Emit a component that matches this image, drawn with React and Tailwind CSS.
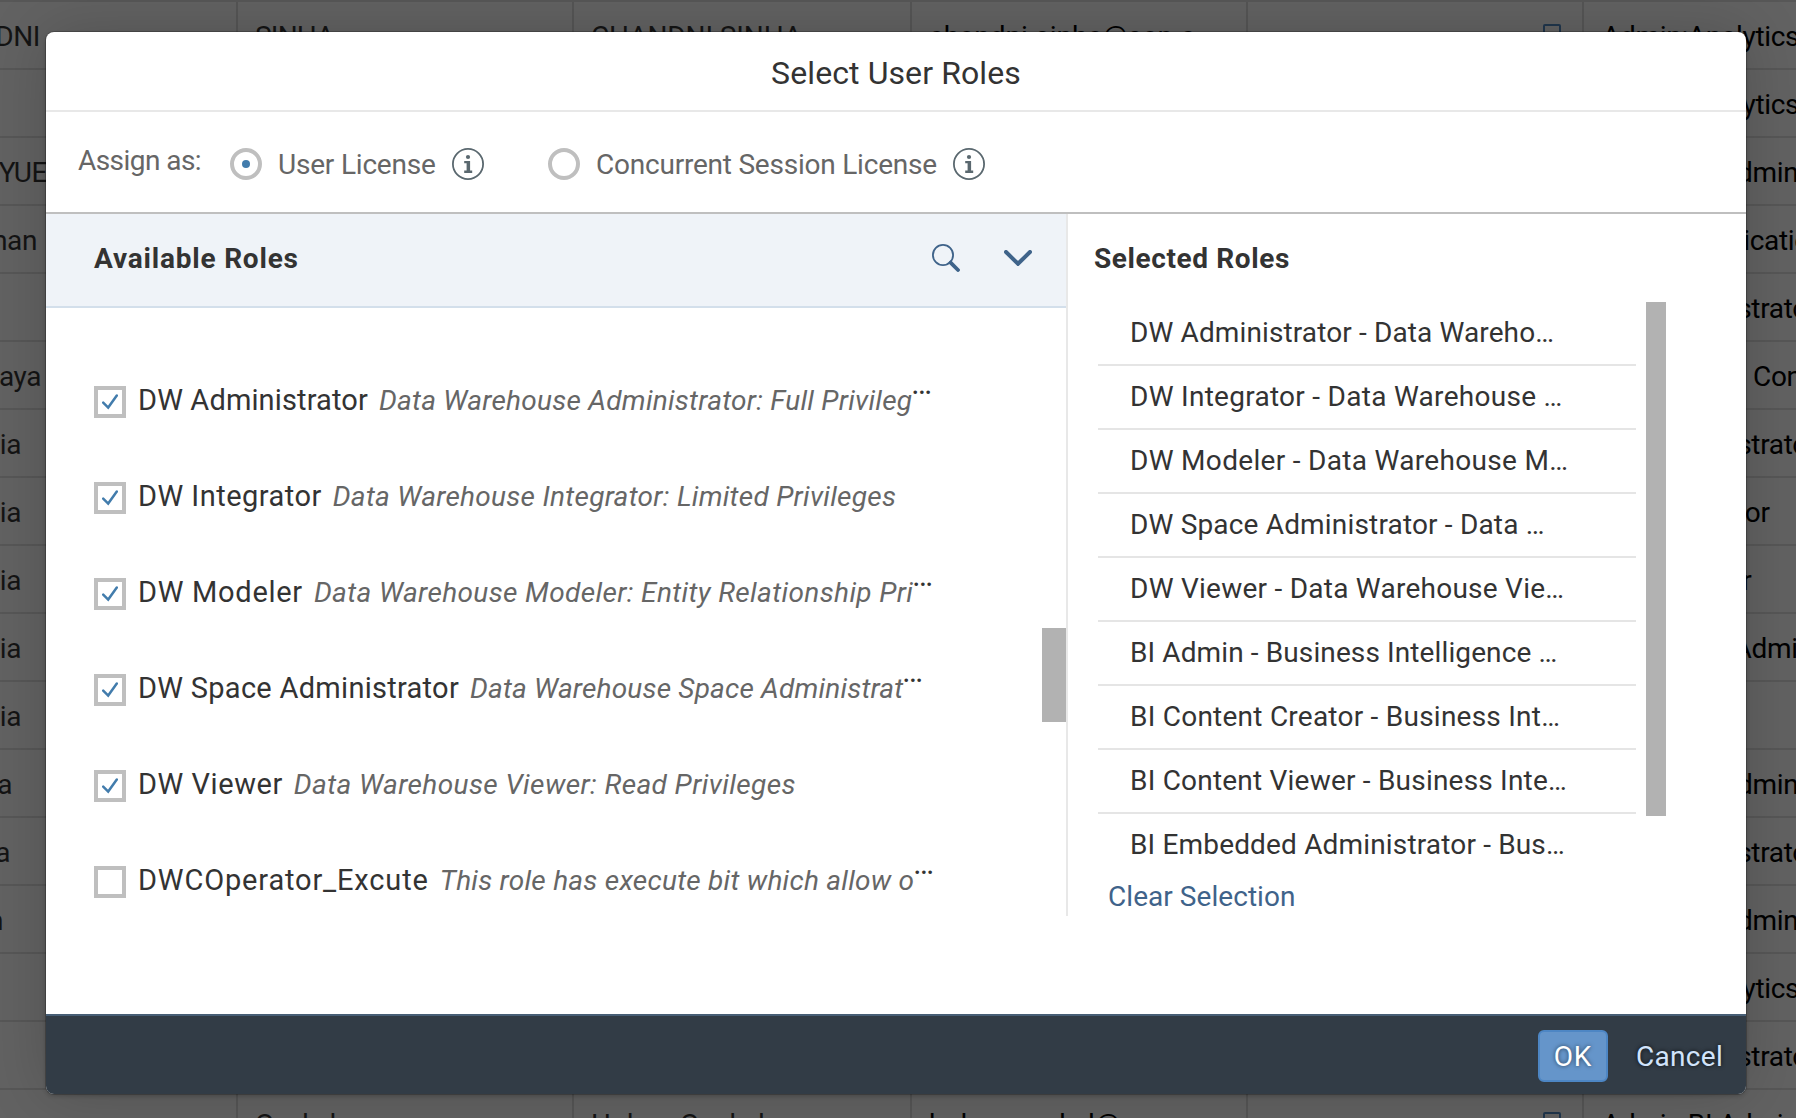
const FONT = 'font-[Roboto,"Liberation_Sans",sans-serif]';

const tableRows = [
  { first: "CHANDNI", end: "w-[40px]", last: "SINHA", name: "CHANDNI SINHA", mail: "chandni.sinha@sap.c", box: true, role: "Admin:Analytics" },
  { first: "", end: "w-[40px]", role: "Admin:Analytics" },
  { first: "YUE", end: "w-[47px]", role: "Admin:BI Admin" },
  { first: "Rahman", end: "w-[37px]", role: "Admin:Application" },
  { first: "", end: "w-[40px]", role: "DW Administrator" },
  { first: "aya", end: "w-[41px]", role: "Content", pad: "pl-[169px]" },
  { first: "ia", end: "w-[21px]", role: "DW Administrator" },
  { first: "ia", end: "w-[21px]", role: "DW Integrator" },
  { first: "ia", end: "w-[21px]", role: "DW Modeler" },
  { first: "ia", end: "w-[21px]", role: "DW Space Admin" },
  { first: "ia", end: "w-[21px]", role: "" },
  { first: "a", end: "w-[12px]", role: "Admin:BI Admin" },
  { first: "a", end: "w-[10px]", role: "DW Administrator" },
  { first: "n", end: "w-[3px]", role: "Admin:BI Admin" },
  { first: "", end: "w-[40px]", role: "Admin:Analytics" },
  { first: "", end: "w-[40px]", role: "DW Administrator" },
  { first: "", end: "w-[40px]", last: "Gockel", name: "Holger Gockel", mail: "holger.gockel@", box: true, role: "Admin:BI Admin" },
];

const roles = [
  { name: "DW Administrator", desc: "Data Warehouse Administrator: Full Privileg", cut: true, on: true, nt: "tracking-[0.13px]", dt: "tracking-[0.25px]", gap: "ml-[11px]" },
  { name: "DW Integrator", desc: "Data Warehouse Integrator: Limited Privileges", on: true, nt: "tracking-[0.47px]", dt: "tracking-[0.27px]", gap: "ml-[11px]" },
  { name: "DW Modeler", desc: "Data Warehouse Modeler: Entity Relationship Pri", cut: true, on: true, nt: "tracking-[0.71px]", dt: "tracking-[0.37px]", gap: "ml-[11px]" },
  { name: "DW Space Administrator", desc: "Data Warehouse Space Administrat", cut: true, on: true, nt: "tracking-[0.28px]", dt: "tracking-[0.18px]", gap: "ml-[11px]" },
  { name: "DW Viewer", desc: "Data Warehouse Viewer: Read Privileges", on: true, nt: "tracking-[0.55px]", dt: "tracking-[0.4px]", gap: "ml-[11px]" },
  { name: "DWCOperator_Excute", desc: "This role has execute bit which allow o", cut: true, on: false, nt: "tracking-[0.84px]", dt: "tracking-[0.25px]", gap: "ml-[11px]" },
];

const selected = [
  ["DW Administrator - Data Wareho…", "tracking-[0.12px]"],
  ["DW Integrator - Data Warehouse …", "tracking-[0.28px]"],
  ["DW Modeler - Data Warehouse M…", "tracking-[0.31px]"],
  ["DW Space Administrator - Data …", "tracking-[0.17px]"],
  ["DW Viewer - Data Warehouse Vie…", "tracking-[0.25px]"],
  ["BI Admin - Business Intelligence …", "tracking-[0.11px]"],
  ["BI Content Creator - Business Int…", "tracking-[0.24px]"],
  ["BI Content Viewer - Business Inte…", "tracking-[0.21px]"],
  ["BI Embedded Administrator - Bus…", "tracking-[0.16px]"],
];

function InfoIcon() {
  return (
    <svg className="size-8 shrink-0" viewBox="0 0 32 32" fill="none">
      <circle cx="16" cy="16" r="15.1" stroke="#5a686f" strokeWidth="1.8" />
      <circle cx="16" cy="9" r="2.1" fill="#5a686f" />
      <path d="M12.2 13h5.9v9.6h2.1v2.3h-8v-2.3h2.4v-7.3h-2.4z" fill="#5a686f" />
    </svg>
  );
}

function Radio({ on }) {
  return (
    <span className="flex size-8 shrink-0 items-center justify-center rounded-full border-4 border-[#bfbfbf] bg-white">
      {on && <span className="size-2 rounded-full bg-[#427cac]" />}
    </span>
  );
}

function UserTable() {
  return (
    <div className="h-[1118px] overflow-hidden bg-[#626262] text-[28px] leading-[66px] tracking-[-0.4px]">
      {tableRows.map((r, i) => (
        <div key={i} className="grid h-[68px] grid-cols-[238px_336px_338px_336px_336px_212px] overflow-hidden whitespace-nowrap border-t-2 border-[#575757] text-[#141414]">
          <div className="overflow-hidden border-r-2 border-[#555]">
            <div className={`flex justify-end pt-[2px] ${r.end}`}>{r.first}</div>
          </div>
          <div className="border-r-2 border-[#555] pl-[17px] pt-[2px] tracking-[-0.8px]">{r.last}</div>
          <div className="border-r-2 border-[#555] pl-[17px] pt-[2px] tracking-[-0.1px]">{r.name}</div>
          <div className="border-r-2 border-[#555] pl-[17px] pt-[2px] tracking-[0px] text-black">{r.mail}</div>
          <div className="flex justify-end border-r-2 border-[#555] pr-[21px] pt-[22px]">
            {r.box && <span className="h-6 w-[18px] rounded-xs border-2 border-[#20364c]" />}
          </div>
          <div className={`overflow-hidden pt-[2px] tracking-[-0.3px] text-black ${r.pad || "pl-[18px]"}`}>{r.role}</div>
        </div>
      ))}
    </div>
  );
}

export default function App() {
  return (
    <div className={`relative h-[1118px] w-[1796px] overflow-hidden ${FONT}`}>
      <UserTable />
      <div className="absolute left-[46px] top-8 flex h-[1062px] w-[1700px] flex-col overflow-hidden rounded-lg bg-white text-[28px] text-[#333] shadow-[0_0_0_1px_rgba(0,0,0,0.2),0_2px_4px_rgba(0,0,0,0.2),0_0_60px_rgba(0,0,0,0.18)]">
        <header className="flex h-20 items-center justify-center border-b-2 border-[#e8e8e8] pt-1 text-[32px] tracking-[0.1px]">
          Select User Roles
        </header>

        <section className="flex h-[102px] items-center border-b-2 border-[#bfbfbf] pl-8 pt-1 text-[#666]">
          <span className="w-[152px] pb-1.5 tracking-[-0.55px]">Assign as:</span>
          <Radio on />
          <span className="w-[190px] pl-4 pt-px tracking-[-0.2px]">User License</span>
          <InfoIcon />
          <span className="w-16" />
          <Radio />
          <span className="w-[373px] pl-4 pt-px tracking-[-0.22px]">Concurrent Session License</span>
          <InfoIcon />
        </section>

        <main className="flex h-[702px]">
          <section className="flex w-[1022px] flex-col border-r-2 border-[#e8e8e8]">
            <div className="flex h-[94px] shrink-0 items-center border-b-2 border-[#d3dfeb] bg-[#eff3f8] pb-[3px] pl-12 pr-[34px]">
              <h2 className="grow font-bold tracking-[0.8px]">Available Roles</h2>
              <svg className="mt-[-1px] h-7 w-7" viewBox="0 0 28 28" fill="none" stroke="#3f638a">
                <circle cx="11" cy="11" r="10.1" strokeWidth="1.8" />
                <path d="M18.6 18.6L26 26" strokeWidth="3.8" strokeLinecap="round" />
              </svg>
              <svg className="ml-11 mt-[-2px] h-4 w-7" viewBox="0 0 28 16" fill="none" stroke="#3f638a">
                <path d="M2 2l12 11.8L26 2" strokeWidth="4" strokeLinecap="round" />
              </svg>
            </div>
            <div className="flex grow overflow-hidden">
              <div className="grow pl-12 pt-11">
                {roles.map((r) => (
                  <div key={r.name} className="flex h-24 items-center whitespace-nowrap">
                    <span className="mt-1 flex size-8 items-center justify-center border-4 border-[#bfbfbf]">
                      {r.on && (
                        <svg className="size-4" viewBox="0 0 16 16" fill="none">
                          <path d="M1.2 8.6l5 5L14.8 1.6" stroke="#427cac" strokeWidth="2.5" strokeLinecap="round" />
                        </svg>
                      )}
                    </span>
                    <span className={`pl-3 pt-0.5 text-[29px] ${r.nt}`}>{r.name}</span>
                    <span className={`pt-0.5 italic text-[#666] ${r.gap} ${r.dt}`}>{r.desc}</span>
                    {r.cut && <span className="-ml-px mb-[33px] text-[31px] leading-none">…</span>}
                  </div>
                ))}
              </div>
              <div className="mt-80 h-[94px] w-6 shrink-0 bg-[#b2b2b2]" />
            </div>
          </section>

          <section className="flex grow flex-col">
            <h2 className="flex h-[88px] items-center pl-[26px] pt-[1px] font-bold tracking-[0.61px]">Selected Roles</h2>
            <div className="flex h-[576px] pl-[30px]">
              <ul className="w-[538px]">
                {selected.map(([label, tracking]) => (
                  <li key={label} className={`flex h-16 items-center whitespace-nowrap border-b-2 border-[#e5e5e5] pl-8 last:border-transparent ${tracking}`}>
                    {label}
                  </li>
                ))}
              </ul>
              <div className="ml-2.5 h-[514px] w-5 bg-[#b2b2b2]" />
            </div>
            <a className="pl-10 pt-px leading-9 tracking-[0.05px] text-[#3f638a]">Clear Selection</a>
          </section>
        </main>

        <footer className="mt-auto flex h-20 items-center justify-end border-t-2 border-[#475e75] bg-[#323c46] pr-[23px] pt-[2px]">
          <button className="h-[52px] w-[70px] rounded-md border-2 border-[#4d86c4] bg-[#6595ca] pt-px tracking-[0.8px] text-white [text-shadow:0_0_4px_rgba(0,0,0,0.6)]">
            OK
          </button>
          <button className="ml-[28px] pt-px tracking-[0.3px] text-[#d1e4fb] [text-shadow:0_0_4px_rgba(0,0,0,0.8)]">Cancel</button>
        </footer>
      </div>
    </div>
  );
}
